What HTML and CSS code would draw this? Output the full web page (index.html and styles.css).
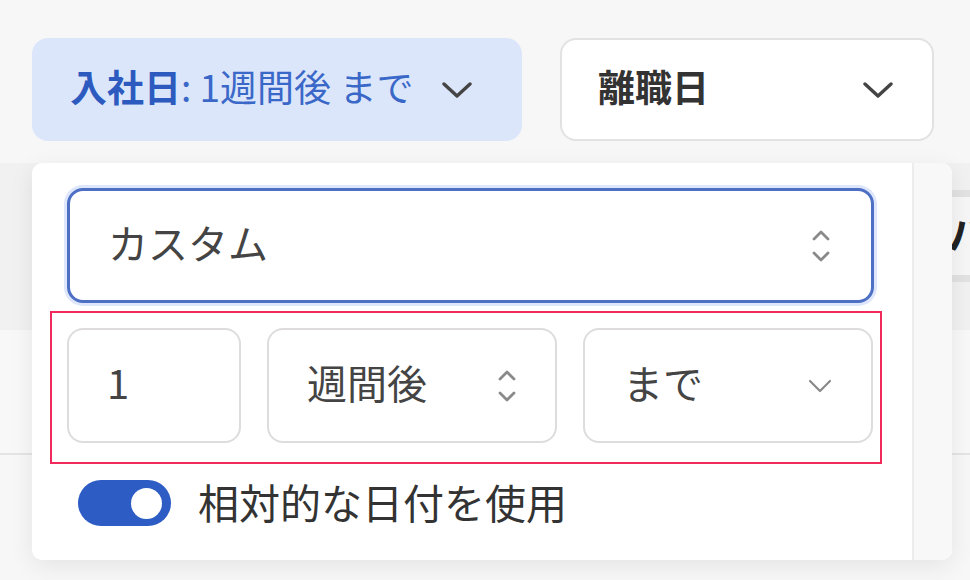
FILE: index.html
```html
<!DOCTYPE html>
<html lang="ja">
<head>
  <meta charset="UTF-8" />
  <title>入社日フィルター</title>
  <link rel="stylesheet" href="styles.css">
</head>
<body>
  <div class="page">
    <div class="filters">
      <button class="filter filter-active" type="button">
        <span class="filter-text"><b>入社日</b>: 1週間後 まで</span>
        <svg class="chevron" width="32" height="16" viewBox="0 0 32 16"><path d="M3 2 L16 14 L29 2" fill="none" stroke="#444" stroke-width="3.4" stroke-linecap="round" stroke-linejoin="round"/></svg>
      </button>
      <button class="filter filter-plain" type="button">
        <span class="filter-text"><b>離職日</b></span>
        <svg class="chevron" width="32" height="16" viewBox="0 0 32 16"><path d="M3 2 L16 14 L29 2" fill="none" stroke="#444" stroke-width="3.4" stroke-linecap="round" stroke-linejoin="round"/></svg>
      </button>
    </div>

    <div class="table">
      <div class="table-head">
        <div class="col-chip">パート</div>
      </div>
      <div class="table-row"></div>
    </div>

    <!-- 日付フィルターのポップオーバー -->
    <div class="popover">
      <div class="popover-main">
        <div class="select select-focus">
          <span class="value">カスタム</span>
          <svg class="updown" width="20" height="36" viewBox="0 0 20 36"><path d="M3 11 L10 4 L17 11 M3 25 L10 32 L17 25" fill="none" stroke="#8a8a8a" stroke-width="2.8" stroke-linecap="round" stroke-linejoin="round"/></svg>
        </div>

        <div class="relative-row">
          <div class="field field-num"><span class="value">1</span></div>
          <div class="field">
            <span class="value">週間後</span>
            <svg class="updown" width="20" height="36" viewBox="0 0 20 36"><path d="M3 11 L10 4 L17 11 M3 25 L10 32 L17 25" fill="none" stroke="#8a8a8a" stroke-width="2.8" stroke-linecap="round" stroke-linejoin="round"/></svg>
          </div>
          <div class="field">
            <span class="value">まで</span>
            <svg class="chevron-small" width="26" height="16" viewBox="0 0 26 16"><path d="M3 3 L13 13 L23 3" fill="none" stroke="#8a8a8a" stroke-width="2.2" stroke-linecap="round" stroke-linejoin="round"/></svg>
          </div>
        </div>

        <label class="toggle-row">
          <span class="toggle"><span class="knob"></span></span>
          <span class="toggle-label">相対的な日付を使用</span>
        </label>
      </div>
      <div class="popover-side"></div>
    </div>
  </div>
</body>
</html>
```

FILE: styles.css
```css
html, body {
  margin: 0;
  padding: 0;
}

body {
  width: 970px;
  height: 580px;
  overflow: hidden;
  background-color: #f7f7f8;
  font-family: "Noto Sans CJK JP", "Noto Sans", sans-serif;
  color: #3a3a3a;
}

.page {
  position: relative;
  height: 580px;
}

/* 上部のフィルターボタン */
.filters {
  display: flex;
  gap: 38px;
  padding: 38px 0 0 32px;
}

.filter {
  display: flex;
  align-items: center;
  height: 103px;
  box-sizing: border-box;
  border-radius: 16px;
  font-family: inherit;
  font-size: 37px;
  cursor: pointer;
}

.filter-text {
  padding-bottom: 7px;
}

.filter b {
  font-weight: bold;
}

.filter-active {
  width: 490px;
  padding: 0 38px;
  gap: 28px;
  border: none;
  background-color: #dce6fb;
  color: #3a68c8;
}

.filter-active b {
  color: #2c5abf;
}

.filter-plain {
  width: 374px;
  padding: 0 38px 0 36px;
  justify-content: space-between;
  border: 2px solid #e2e2e2;
  background-color: #fff;
  color: #333;
}

/* 後ろにある一覧 */
.table {
  margin-top: 22px;
}

.table-head {
  height: 167px;
  box-sizing: border-box;
  padding: 27px 0 0 952px;
  background-color: #f1f1f2;
}

.col-chip {
  height: 92px;
  box-sizing: border-box;
  border-top: 7px solid #e2e2e3;
  border-bottom: 7px solid #e2e2e3;
  background-color: #f6f6f6;
  font-size: 40px;
  font-weight: bold;
  color: #222;
  white-space: nowrap;
  line-height: 70px;
  margin-left: -4px;
}

.table-row {
  height: 123px;
  border-bottom: 2px solid #e4e4e5;
  background-color: #f8f8f8;
}

/* ポップオーバー */
.popover {
  position: absolute;
  left: 32px;
  top: 163px;
  width: 920px;
  height: 397px;
  display: flex;
  border-radius: 10px;
  background-color: #fff;
  box-shadow: 0 6px 24px rgba(0, 0, 0, 0.08);
  overflow: hidden;
}

.popover-main {
  width: 880px;
  box-sizing: border-box;
  padding: 25px 38px 0 35px;
}

.popover-side {
  flex: 1;
  background-color: #f8f8f9;
  border-left: 2px solid #ececed;
}

.select, .field {
  display: flex;
  align-items: center;
  justify-content: space-between;
  height: 115px;
  box-sizing: border-box;
  border-radius: 16px;
  font-size: 40px;
  color: #444;
  background-color: #fff;
}

.value {
  padding-bottom: 7px;
}

.select {
  padding: 0 40px 0 38px;
}

.select-focus {
  border: 3px solid #4d70c4;
  box-shadow: 0 0 0 3px #dde6fa;
}

.relative-row {
  display: flex;
  gap: 26px;
  margin: 8px -8px 0 -17px;
  padding: 15px 7px 19px 15px;
  border: 2px solid #f2295b;
}

.field {
  width: 290px;
  padding: 0 38px 0 38px;
  border: 2px solid #dedcdc;
}

.field-num {
  width: 174px;
}

.toggle-row {
  display: flex;
  align-items: center;
  gap: 27px;
  height: 46px;
  margin: 16px 0 0 11px;
}

.toggle {
  display: flex;
  align-items: center;
  justify-content: flex-end;
  width: 93px;
  height: 46px;
  box-sizing: border-box;
  padding-right: 9px;
  border-radius: 23px;
  background-color: #2d5cc5;
}

.knob {
  width: 31px;
  height: 31px;
  border-radius: 50%;
  background-color: #fff;
}

.toggle-label {
  font-size: 41px;
  line-height: 46px;
  color: #333;
  padding-bottom: 4px;
}
```
